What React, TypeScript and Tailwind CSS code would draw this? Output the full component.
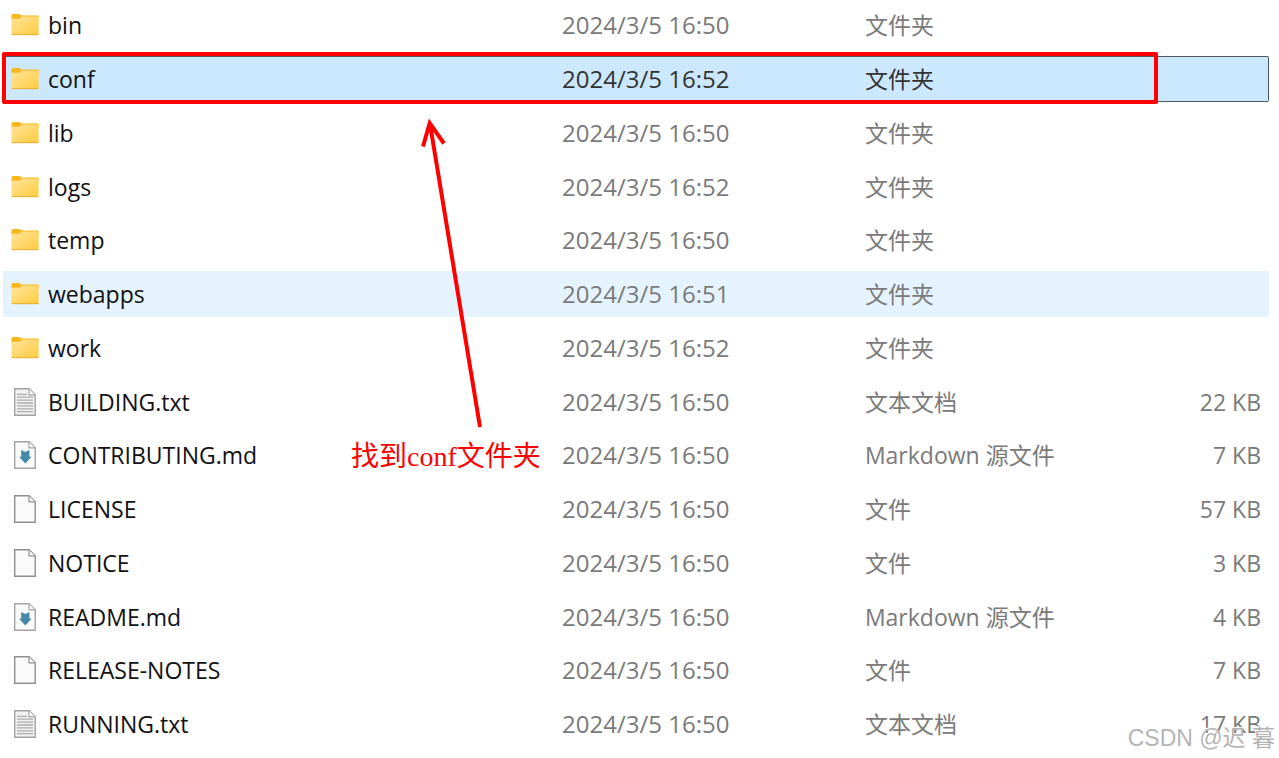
import clsx from "clsx";

type Kind = "folder" | "text" | "markdown" | "file";

type Entry = {
  name: string;
  modified: string;
  kind: Kind;
  size?: string;
  state?: "selected" | "hover";
};

const entries: Entry[] = [
  { name: "bin", modified: "2024/3/5 16:50", kind: "folder" },
  { name: "conf", modified: "2024/3/5 16:52", kind: "folder", state: "selected" },
  { name: "lib", modified: "2024/3/5 16:50", kind: "folder" },
  { name: "logs", modified: "2024/3/5 16:52", kind: "folder" },
  { name: "temp", modified: "2024/3/5 16:50", kind: "folder" },
  { name: "webapps", modified: "2024/3/5 16:51", kind: "folder", state: "hover" },
  { name: "work", modified: "2024/3/5 16:52", kind: "folder" },
  { name: "BUILDING.txt", modified: "2024/3/5 16:50", kind: "text", size: "22 KB" },
  { name: "CONTRIBUTING.md", modified: "2024/3/5 16:50", kind: "markdown", size: "7 KB" },
  { name: "LICENSE", modified: "2024/3/5 16:50", kind: "file", size: "57 KB" },
  { name: "NOTICE", modified: "2024/3/5 16:50", kind: "file", size: "3 KB" },
  { name: "README.md", modified: "2024/3/5 16:50", kind: "markdown", size: "4 KB" },
  { name: "RELEASE-NOTES", modified: "2024/3/5 16:50", kind: "file", size: "7 KB" },
  { name: "RUNNING.txt", modified: "2024/3/5 16:50", kind: "text", size: "17 KB" },
];

const kindLabels: Record<Kind, string> = {
  folder: "文件夹",
  text: "文本文档",
  markdown: "Markdown 源文件",
  file: "文件",
};

function FolderIcon() {
  return (
    <svg aria-hidden="true" className="h-[22px] w-7" viewBox="0 0 28 22">
      <defs>
        <linearGradient id="folder" x1="0" x2="1" y1="0" y2="1">
          <stop offset="0" stopColor="#ffe59c" />
          <stop offset="1" stopColor="#ffca3e" />
        </linearGradient>
      </defs>
      <path d="M.5 6V1.5Q.5 0 2 0h6.5l2 1.6H27q.7 0 .7.7V6z" fill="#f9b71d" />
      <path d="M.5 4.8h8.2L10.8 2.6H27.6V20.2Q27.6 21 26.8 21H1.3Q.5 21 .5 20.2z" fill="url(#folder)" />
      <path d="M.7 20.7H27.4" stroke="#e5a92e" strokeWidth=".9" />
    </svg>
  );
}

function PageIcon({ kind }: { kind: Kind }) {
  const lined = kind === "text";
  const edge = kind === "file" ? "#8f8f8f" : "#a3a3a3";

  return (
    <svg aria-hidden="true" className="h-7 w-[22px]" viewBox="0 0 22 28">
      <path d="M.7.7H15.2L21.2 6.7V27.3H.7z" fill={lined ? "#f1f1f1" : "#fafafa"} stroke={edge} strokeWidth="1.4" />
      <path d="M15 1V6.9H21" fill="#fff" stroke={edge} strokeWidth="1.2" />
      {lined && (
        <path
          d="M3 6.3H13M3 9.2H19M3 12.1H19M3 15H19M3 17.9H19M3 20.8H19M3 23.7H19"
          stroke="#adadad"
          strokeWidth="1.3"
        />
      )}
      {kind === "markdown" && (
        <path d="M7.2 9 11.3 11 15.4 9V15.8H17.6L11.3 22.6 5 15.8H7.2z" fill="#4489a8" />
      )}
    </svg>
  );
}

function Row({ entry }: { entry: Entry }) {
  const selected = entry.state === "selected";
  const muted = selected ? "text-[#333]" : "text-[#7a7a7a]";

  return (
    <tr
      className={clsx(
        "h-[46px] nth-[4n]:h-[45px] [&>*]:p-0 [&>*:first-child]:rounded-l-xs [&>*:last-child]:rounded-r-xs",
        selected &&
          "[&>*]:border-y [&>*]:border-[#4d5860] [&>*]:bg-[#cce8ff] [&>*:last-child]:border-r",
        entry.state === "hover" && "[&>*]:bg-[#e5f3ff]",
      )}
    >
      <th className="text-left font-normal text-[#111]" scope="row">
        <div className="flex items-center gap-2 pl-[7px]">
          <span className="flex w-[30px] justify-center">
            {entry.kind === "folder" ? <FolderIcon /> : <PageIcon kind={entry.kind} />}
          </span>
          {entry.name}
        </div>
      </th>
      <td className={clsx("text-2xl leading-8", muted)}>
        <div className="pl-0.5">{entry.modified}</div>
      </td>
      <td className={muted}>
        <div className="pl-px">{kindLabels[entry.kind]}</div>
      </td>
      <td className={clsx("text-right", muted)}>
        <div className="pr-2">{entry.size}</div>
      </td>
    </tr>
  );
}

export default function App() {
  return (
    <main
      className="relative min-h-screen overflow-hidden bg-white pr-2.5 pl-[3px] font-['Open_Sans','Noto_Sans_CJK_SC',sans-serif]"
      lang="zh-CN"
    >
      <table className="-mt-1.5 w-full table-fixed border-separate border-spacing-x-0 border-spacing-y-2 text-[23px] leading-8 whitespace-nowrap">
        <colgroup>
          <col className="w-[44%]" />
          <col className="w-[24%]" />
          <col className="w-[20%]" />
          <col className="w-[12%]" />
        </colgroup>
        <tbody>
          {entries.map((entry) => (
            <Row entry={entry} key={entry.name} />
          ))}
        </tbody>
      </table>

      <div className="pointer-events-none absolute top-[52px] left-0.5 h-[52px] w-[1156px] rounded-xs border-4 border-[#ff0000]" />
      <svg
        aria-hidden="true"
        className="pointer-events-none absolute top-[116px] left-[416px] h-[316px] w-[72px]"
        fill="none"
        stroke="#ff0000"
        strokeWidth="4"
        viewBox="0 0 72 316"
      >
        <path d="M64 311 14 8M7 30.5 13.7 7 28 27.5" />
      </svg>
      <p className="absolute top-[437px] left-[351px] font-['Liberation_Serif','Noto_Sans_CJK_SC',serif] text-[28px] leading-10 text-[#ff0000]">
        找到conf文件夹
      </p>
      <p className="absolute right-1 bottom-1 font-['Liberation_Sans','Noto_Sans_CJK_SC',sans-serif] text-[23px] leading-8 text-[#b5b5b5] [text-shadow:-1px_-1px_0_#ffffff]">
        CSDN @迟 暮
      </p>
    </main>
  );
}
